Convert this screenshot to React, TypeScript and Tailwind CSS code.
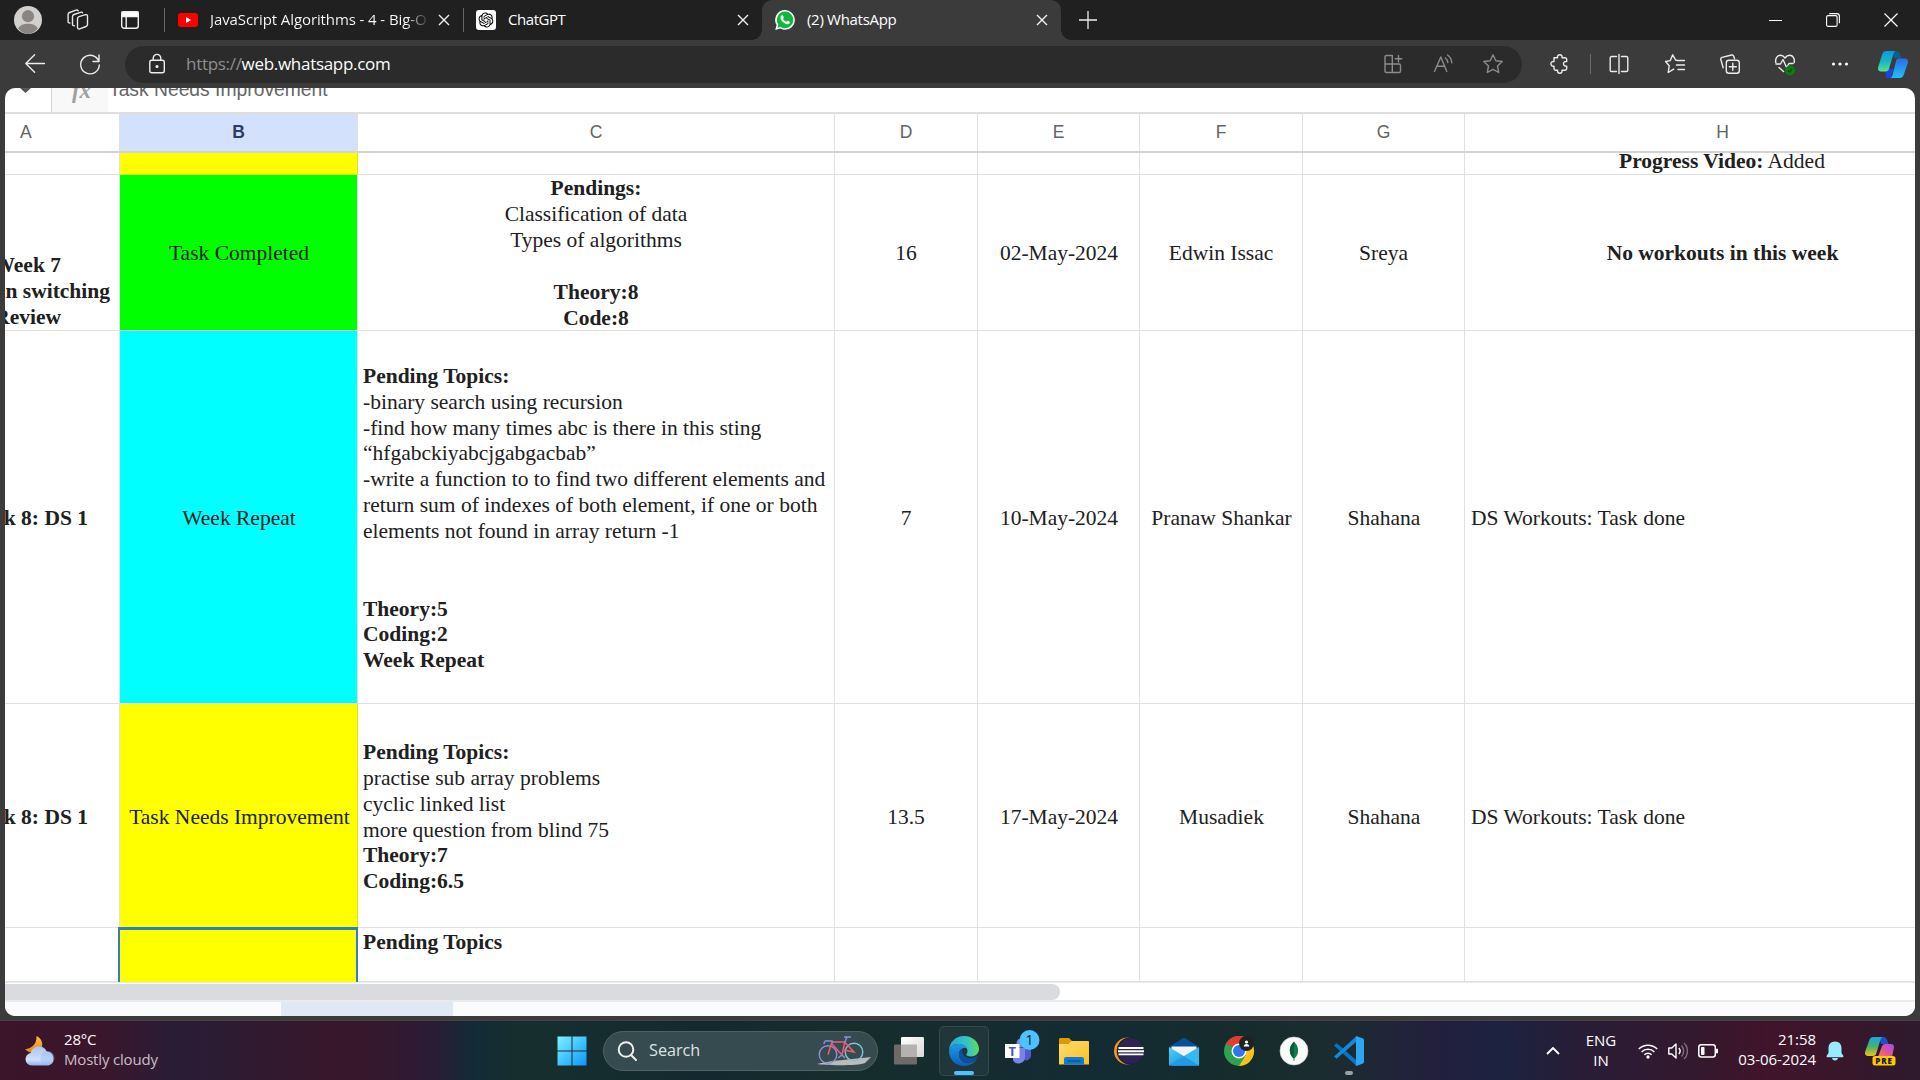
import type { ReactNode } from "react";
import { RiOpenaiFill } from "react-icons/ri";

const COLS = "grid grid-cols-[115px_238px_477px_143px_162px_163px_162px_1fr]";

function TabClose() {
  return (
    <svg className="size-3 shrink-0" viewBox="0 0 12 12" stroke="#f2f2f2" strokeWidth="1.4" fill="none">
      <path d="M1 1l10 10M11 1L1 11" />
    </svg>
  );
}

function TabStrip() {
  return (
    <div className="flex h-10 shrink-0 items-center bg-[#202020] font-['Open_Sans',sans-serif] text-[15px] text-white">
      <svg className="ml-3.5 size-7 shrink-0" viewBox="0 0 28 28">
        <circle cx="14" cy="14" r="14" fill="#d2d0ce" />
        <circle cx="14" cy="10.2" r="6.1" fill="#8a8582" />
        <path d="M4.2 22.5C6 19 10 17.8 14 17.8s8 1.2 9.800 4.700A14 14 0 0 1 14 28a14 14 0 0 1-9.800-5.500z" fill="#8a8582" />
      </svg>
      <svg className="ml-[25px] size-[22px] shrink-0" viewBox="0 0 22 22" fill="none" stroke="#e8e8e8" strokeWidth="1.4" strokeLinejoin="round" strokeLinecap="round">
        <path d="M10.500 9.500c0-1 .5-1.500 1.500-1.800l6.500-2c1.200-.3 2 .2 2 1.300v8.500c0 1-.5 1.600-1.500 2l-6.300 2.300c-1.200.4-2.200-.1-2.200-1.300z" />
        <path d="M7.300 16.800c-1 .1-1.800-.4-1.800-1.500V7.500c0-1 .5-1.600 1.500-2l6.500-2.200c1-.3 1.800-.1 2 .6" />
        <path d="M2.900 14c-1 .1-1.800-.4-1.800-1.500V5.500c0-1 .5-1.600 1.500-2L9 1.200c1-.3 1.800-.1 2.100.6" />
      </svg>
      <svg className="ml-8 size-[18px] shrink-0" viewBox="0 0 18 18" fill="none" stroke="#f2f2f2" strokeWidth="1.4">
        <rect x=".7" y=".7" width="16.600" height="16.600" rx="2.500" />
        <path d="M1 1h16v4.500H1z" fill="#fff" />
        <path d="M5.200 5v12" />
      </svg>
      <div className="ml-[25px] h-6 w-px shrink-0 bg-[#666]" />
      <div className="flex w-[298px] shrink-0 items-center pl-[13px]">
        <svg className="h-[14px] w-5 shrink-0" viewBox="0 0 20 14">
          <rect width="20" height="14" rx="3.200" fill="#f00" />
          <path d="M8 4l5.200 3L8 10z" fill="#fff" />
        </svg>
        <span className="mb-0.5 ml-3 w-[218px] overflow-hidden bg-linear-to-r from-white from-90% to-[#333] bg-clip-text tracking-[-0.1px] whitespace-nowrap text-transparent">
          JavaScript Algorithms - 4 - Big-O
        </span>
        <div className="ml-[10px] flex"><TabClose /></div>
      </div>
      <div className="h-6 w-px shrink-0 bg-[#666]" />
      <div className="flex w-[298px] shrink-0 items-center pl-3">
        <span className="flex size-5 items-center justify-center rounded-[3px] bg-white text-black"><RiOpenaiFill size={18} /></span>
        <span className="mb-0.5 ml-3 grow tracking-[-0.45px]">ChatGPT</span>
        <div className="mr-[13px] flex"><TabClose /></div>
      </div>
      <div className="relative flex h-10 w-[299px] shrink-0 items-center rounded-t-[10px] bg-[#3b3b3b] pl-[13px]">
        <div className="absolute bottom-0 -left-[10px] size-[10px] bg-[radial-gradient(circle_at_0_0,#202020_9.500px,#3b3b3b_10px)]" />
        <div className="absolute -right-[10px] bottom-0 size-[10px] bg-[radial-gradient(circle_at_100%_0,#202020_9.500px,#3b3b3b_10px)]" />
        <svg className="size-5 shrink-0" viewBox="0 0 20 20">
          <path d="M10 0a9.900 9.900 0 0 1 0 19.800 10 10 0 0 1-4.700-1.200L.2 20l1.400-5A9.900 9.900 0 0 1 10 0z" fill="#fff" />
          <path d="M10 1.600a8.300 8.300 0 0 1 0 16.600 8.300 8.300 0 0 1-4.300-1.200l-3.200.8.900-3.100A8.300 8.300 0 0 1 10 1.600z" fill="#0fb83c" />
          <path d="M6.700 5.300c.4-.3 1-.3 1.200.1l.9 1.900c.1.400-.8 1.200-.7 1.500.7 1.400 1.800 2.400 3.200 2.900.4.100 1-1.100 1.400-.9l1.900.9c.6.300.2 1.500-.3 1.900-.8.700-2 .8-3.200.3-2.500-.9-4.500-2.800-5.400-4.900-.5-1.500-.2-2.900 1-3.700z" fill="#fff" />
        </svg>
        <span className="mb-0.5 ml-3 grow tracking-[-0.3px]">(2) WhatsApp</span>
        <div className="mr-[13px] flex"><TabClose /></div>
      </div>
      <svg className="ml-[18px] size-[18px]" viewBox="0 0 18 18" stroke="#eee" strokeWidth="1.300"><path d="M9 0v18M0 9h18" /></svg>
      <div className="ml-auto flex items-center">
        <div className="h-px w-[13px] bg-white" />
        <svg className="ml-11 size-[14px]" viewBox="0 0 14 14" fill="none" stroke="#fff" strokeWidth="1.100">
          <rect x=".6" y="2.600" width="10.500" height="10.800" rx="1.500" />
          <path d="M3.200.6h7.500a2.700 2.700 0 0 1 2.700 2.700v7" />
        </svg>
        <svg className="mr-[22px] ml-11 size-[14px]" viewBox="0 0 14 14" stroke="#fff" strokeWidth="1.200"><path d="M.5.5l13 13M13.500.5L.5 13.500" /></svg>
      </div>
    </div>
  );
}

function Tool({ children, dim, w }: { children: ReactNode; dim?: boolean; w: string }) {
  return (
    <div className={`flex shrink-0 justify-center ${w}`}>
      <svg className="size-5 shrink-0 overflow-visible" viewBox="0 0 20 20" fill="none" stroke={dim ? "#8c8c8c" : "#ececec"} strokeWidth="1.400" strokeLinecap="round" strokeLinejoin="round">
        {children}
      </svg>
    </div>
  );
}

const STAR = "M10 .8l2.800 5.900 6.400.8-4.700 4.500 1.200 6.500L10 15.400l-5.700 3.100 1.200-6.500L.8 7.500l6.400-.8z";

function Toolbar() {
  return (
    <div className="flex h-12 shrink-0 items-center bg-[#3b3b3b] font-['Open_Sans',sans-serif]">
      <div className="ml-[25px] flex">
        <Tool w="w-5"><path d="M19.500 9.500H.8M9.600 .8L.8 9.500l8.800 8.800" /></Tool>
        <div className="w-[35px]" />
        <Tool w="w-5"><path d="M18.800 7.500A9.300 9.300 0 1 0 19.300 11M19 1v6.500h-6" /></Tool>
      </div>
      <div className="ml-[25px] flex h-[37px] w-[1397px] shrink-0 items-center rounded-full bg-[#2b2b2b] text-[17px]">
        <div className="w-[22px]" />
        <Tool w="w-5"><rect x="2.800" y="6.200" width="14.500" height="12.600" rx="2" /><path d="M6.200 6V4.200a3.800 3.800 0 0 1 7.600 0V6" /><circle cx="10" cy="12.500" r=".9" fill="#eee" /></Tool>
        <span className="ml-[19px] tracking-[-0.3px] text-[#8f8f8f]">https://<span className="text-white">web.whatsapp.com</span></span>
        <div className="ml-auto flex items-center pr-1">
          <Tool dim w="w-[50px]"><path d="M8.800 1.500H3.500a1.500 1.500 0 0 0-1.500 1.500v14a1.500 1.500 0 0 0 1.500 1.500H16a1.500 1.500 0 0 0 1.500-1.500v-5.500a1.500 1.500 0 0 0-1.500-1.500H2M9.300 1.500v17M15.500 1.500v6.600M12.200 4.800h6.600" /></Tool>
          <Tool dim w="w-[50px]"><path d="M1.500 17.500L7.800 3l6 14.500M3.800 12.300h8M12.300 4c1.500 1 2.300 2.400 2.500 4.500M14.600 1c2.800 2 4 4.500 4.200 7.800" /></Tool>
          <Tool dim w="w-[50px]"><path d={STAR} /></Tool>
        </div>
      </div>
      <Tool w="ml-4 w-11"><path d="M4 3.800h3.600C7 1.800 8.300.7 9.800.7s2.800 1.100 2.200 3.100h3a1.700 1.700 0 0 1 1.700 1.700v2c-2-.3-3.200.8-3.200 2.300s1.200 2.600 3.200 2.300v2.400a1.700 1.700 0 0 1-1.700 1.700H12c.4 2-.6 3-2.200 3s-2.600-1-2.200-3H5.700A1.700 1.700 0 0 1 4 14.500v-2.300c-2 .3-3.100-.9-3.100-2.400S2 7.200 4 7.500z" /></Tool>
      <div className="ml-2 h-5 w-px bg-[#6a6a6a]" />
      <Tool w="w-[56px]"><path d="M7.500 2.500H2.500a1.300 1.300 0 0 0-1.300 1.300v12.400a1.300 1.300 0 0 0 1.300 1.300h5M12.500 2.500h5a1.300 1.300 0 0 1 1.300 1.300v12.400a1.300 1.300 0 0 1-1.300 1.300h-5M10 .5v19" /></Tool>
      <Tool w="w-[56px]"><path d="M12.500 6.500L10.600 6 7.700.8 5.300 6.600l-4.700.9 3.600 4.300-1 6.700 5.500-3.300M13.500 6.500h6M11.500 11h8M13 15.500h6.500" /></Tool>
      <Tool w="w-[54px]"><path d="M14.500 4.500L13.600 2a1.700 1.700 0 0 0-2-1L2 3.400a1.700 1.700 0 0 0-1.200 2.100l2.400 8.200" /><rect x="6.300" y="6.300" width="13" height="13" rx="2.500" /><path d="M12.800 9.300v7M9.300 12.800h7" /></Tool>
      <Tool w="w-[56px]"><path d="M.8 8.500C0 4.500 2.300 1.300 5.300 1.300c2 0 3.500 1 4.700 2.700 1.200-1.700 2.700-2.700 4.700-2.700 3 0 5.300 3.200 4.500 7.200M1 10h4.500l2.500-4.500 3.600 8L14 9.500h4M4 13.500l4.500 4" /><circle cx="15" cy="16.500" r="4.300" fill="#107c10" stroke="#107c10" /><path d="M13.200 16.700l1.300 1.200 2.200-2.600" stroke="#0a4b0a" /></Tool>
      <Tool w="w-[54px]"><g fill="#fff" stroke="none"><circle cx="3.500" cy="10" r="1.600" /><circle cx="10" cy="10" r="1.600" /><circle cx="16.500" cy="10" r="1.600" /></g></Tool>
      <svg className="ml-[11px] h-[27px] w-[30px] shrink-0" viewBox="0 0 30 27">
        <defs>
          <linearGradient id="cpA" x1="0" y1="0" x2="0" y2="1"><stop stopColor="#0a9be0" /><stop offset=".5" stopColor="#18b5c5" /><stop offset="1" stopColor="#5fe08a" /></linearGradient>
          <linearGradient id="cpB" x1="0" y1="0" x2="0" y2="1"><stop stopColor="#2f6be4" /><stop offset="1" stopColor="#1fc0fa" /></linearGradient>
        </defs>
        <path d="M14 0h4c2.500 0 3.500 1.200 4.300 3.500L23.500 7H16z" fill="#0b5f8e" />
        <path d="M8 27h5l3-9H7l1 5.500c.4 2 0 3.500 0 3.500z" fill="#1c46d8" />
        <path d="M8.500 0H18c-1.500 0-2 1.200-2.600 3l-4.300 14.500c-.7 2.200-1.500 3-3.600 3H3c-2.500 0-3.500-1.800-2.800-4.500L4 4C4.800 1.300 6 0 8.500 0z" fill="url(#cpA)" />
        <path d="M20.500 7.500H27c2.500 0 3.500 1.800 2.800 4.500L26 23c-.9 2.800-2 4-4.500 4H12c1.500 0 2-1.200 2.600-3l3.300-13.500c.6-2.200 1-3 2.600-3z" fill="url(#cpB)" />
      </svg>
    </div>
  );
}

function Cell({ children, className = "" }: { children?: ReactNode; className?: string }) {
  return (
    <div className={`flex min-w-0 items-center overflow-hidden border-r border-b border-[#e0e0e0] whitespace-nowrap ${className}`}>
      {children}
    </div>
  );
}

function Lines({ items, className = "" }: { items: string[]; className?: string }) {
  return (
    <div className={className}>
      {items.map((t, i) => (
        <div key={i} className={t.startsWith("*") ? "h-[25.850px] font-bold" : "h-[25.850px]"}>{t.replace("*", "")}</div>
      ))}
    </div>
  );
}

function Sheet() {
  return (
    <div className="mx-[5px] flex h-[928px] shrink-0 flex-col overflow-hidden rounded-[10px] bg-white">
      <div className="flex h-[26px] shrink-0 overflow-hidden border-b-2 border-[#dedede]">
        <div className="flex w-[47px] justify-center border-r border-[#d5d5d5] pr-1.5">
          <svg className="h-[5px] w-[11px]" viewBox="0 0 11 5"><path d="M0 0h11L5.500 5z" fill="#555" /></svg>
        </div>
        <div className="flex w-[56px] justify-center bg-[#f8f8f8]">
          <span className="-mt-[10px] ml-[3px] font-['Liberation_Serif',serif] text-[23px] leading-[26px] font-bold text-[#a0a0a0] italic">fx</span>
        </div>
        <span className="-mt-[12px] ml-px font-['Liberation_Sans',sans-serif] text-[19.300px] leading-[28px] text-[#666]">Task Needs Improvement</span>
      </div>
      <div className={`${COLS} h-[39px] shrink-0 border-b-2 border-[#d3d3d3] font-['Liberation_Sans',sans-serif] text-[17.500px] text-[#606468]`}>
        <Cell className="border-b-0 border-[#cfcfcf] pl-[15px]">A</Cell>
        <Cell className="justify-center border-b-0 border-[#cfcfcf] bg-[#d3e1fc] font-bold text-[#2b3c66]">B</Cell>
        {["C", "D", "E", "F", "G"].map((c) => (
          <Cell key={c} className="justify-center border-b-0 border-[#cfcfcf]">{c}</Cell>
        ))}
        <Cell className="justify-center border-r-0 border-b-0 pl-[65px]">H</Cell>
      </div>
      <div className="flex h-[829px] shrink-0 flex-col font-['Liberation_Serif',serif] text-[21.500px] leading-[25.850px] text-[#202020]">
        <div className={`${COLS} h-[22px] shrink-0`}>
          <Cell />
          <Cell className="border-[#e6e600] bg-[#ffff00]" />
          <Cell /><Cell /><Cell /><Cell /><Cell />
          <Cell className="items-start justify-center border-r-0 pl-[64px]"><span className="-mt-[4px]"><b>Progress Video:</b> Added</span></Cell>
        </div>
        <div className={`${COLS} h-[156px] shrink-0`}>
          <Cell className="items-end justify-end">
            <div className="flex flex-col items-end">
              <div className="pr-[58px] font-bold">Week 7</div>
              <div className="pr-[9px] font-bold">n switching</div>
              <div className="-mb-px pr-[58px] font-bold">Review</div>
            </div>
          </Cell>
          <Cell className="justify-center border-[#00d820] bg-[#00ff00] pt-[3px] pl-px">Task Completed</Cell>
          <Cell className="justify-center pt-[3px] text-center">
            <Lines items={["*Pendings:", "Classification of data", "Types of algorithms", "", "*Theory:8", "*Code:8"]} />
          </Cell>
          <Cell className="justify-center pt-[3px]">16</Cell>
          <Cell className="justify-center pt-[3px] pl-px">02-May-2024</Cell>
          <Cell className="justify-center pt-[3px]">Edwin Issac</Cell>
          <Cell className="justify-center pt-[3px]">Sreya</Cell>
          <Cell className="justify-center border-r-0 pt-[3px] pl-[65px] font-bold">No workouts in this week</Cell>
        </div>
        <div className={`${COLS} h-[373px] shrink-0`}>
          <Cell className="justify-end pt-1 pr-[31px] font-bold">Week 8: DS 1</Cell>
          <Cell className="justify-center border-[#00e0e0] bg-[#00ffff] pt-1 pl-px">Week Repeat</Cell>
          <Cell className="pt-1 pl-[5px]">
            <Lines
              items={[
                "*Pending Topics:",
                "-binary search using recursion",
                "-find how many times abc is there in this sting",
                "“hfgabckiyabcjgabgacbab”",
                "-write a function to to find two different elements and",
                "return sum of indexes of both element, if one or both",
                "elements not found in array return -1",
                "",
                "",
                "*Theory:5",
                "*Coding:2",
                "*Week Repeat",
              ]}
            />
          </Cell>
          <Cell className="justify-center pt-1">7</Cell>
          <Cell className="justify-center pt-1 pl-px">10-May-2024</Cell>
          <Cell className="justify-center pt-1 pl-px">Pranaw Shankar</Cell>
          <Cell className="justify-center pt-1 pl-px">Shahana</Cell>
          <Cell className="border-r-0 pt-1 pl-[6px]">DS Workouts: Task done</Cell>
        </div>
        <div className={`${COLS} h-[224px] shrink-0`}>
          <Cell className="justify-end pt-1 pr-[31px] font-bold">Week 8: DS 1</Cell>
          <Cell className="justify-center border-[#e6e600] bg-[#ffff00] pt-1 pl-[2px]">Task Needs Improvement</Cell>
          <Cell className="pt-1 pl-[5px]">
            <Lines items={["*Pending Topics:", "practise sub array problems", "cyclic linked list", "more question from blind 75", "*Theory:7", "*Coding:6.5"]} />
          </Cell>
          <Cell className="justify-center pt-1">13.5</Cell>
          <Cell className="justify-center pt-1 pl-px">17-May-2024</Cell>
          <Cell className="justify-center pt-1 pl-px">Musadiek</Cell>
          <Cell className="justify-center pt-1 pl-px">Shahana</Cell>
          <Cell className="border-r-0 pt-1 pl-[6px]">DS Workouts: Task done</Cell>
        </div>
        <div className={`${COLS} h-[54px] shrink-0`}>
          <Cell />
          <div className="relative bg-[#ffff00]">
            <div className="absolute -top-px right-0 bottom-0 -left-[2px] border-t-[3px] border-r-2 border-l-2 border-[#2f7fc4]" />
          </div>
          <Cell className="items-start pt-[2px] pl-[5px] font-bold">Pending Topics</Cell>
          <Cell /><Cell /><Cell /><Cell />
          <Cell className="border-r-0" />
        </div>
      </div>
      <div className="h-[20px] shrink-0 border-t border-b-2 border-[#ebebeb] pt-px">
        <div className="h-4 w-[1055px] rounded-r-full bg-[#dadbde]" />
      </div>
      <div className="flex grow bg-[#f9fbfd]">
        <div className="ml-[276px] w-[172px] bg-[#e1e8f5]" />
      </div>
    </div>
  );
}

function AppIcon({ children, active, dot }: { children: ReactNode; active?: boolean; dot?: boolean }) {
  return (
    <div className="flex w-[55px] shrink-0 justify-center">
      <div className={active ? "relative flex size-[50px] items-center justify-center rounded-[5px] border border-white/10 bg-white/5" : "relative flex size-[50px] items-center justify-center"}>
        <svg className="size-[30px] overflow-visible" viewBox="0 0 30 30">{children}</svg>
        {active && <div className="absolute bottom-0 h-1 w-5 rounded-full bg-[#4cc2ff]" />}
        {dot && <div className="absolute bottom-[1px] h-1 w-2 rounded-full bg-[#9aa0a6]" />}
      </div>
    </div>
  );
}

function Taskbar() {
  return (
    <div className="flex h-[60px] shrink-0 items-center border-t border-[#4a3f45] bg-[linear-gradient(90deg,#3b152a_0,#3a162c_100px,#2b1c36_170px,#2c1c33_220px,#38172c_330px,#36182d_370px,#2b1c35_430px,#122b36_475px,#162e2d_520px,#152d2f_600px,#14292f_700px,#162d2d_850px,#132b33_1100px,#162c2c_1250px,#1c2b31_1340px,#231f3e_1440px,#1c2341_1500px,#2a1c35_1590px,#33192f_1690px,#41142a_1770px,#38172b_1850px,#2d1a2d_1920px)] font-['Open_Sans',sans-serif] text-white">
      <svg className="ml-6 h-[30px] w-[32px] shrink-0" viewBox="0 0 32 30">
        <defs>
          <linearGradient id="moon" x1="0" y1="0" x2="0" y2="1"><stop stopColor="#f8c33a" /><stop offset="1" stopColor="#ef7f1a" /></linearGradient>
          <linearGradient id="cloud" x1="0" y1="0" x2="0" y2="1"><stop stopColor="#a9c4f5" /><stop offset=".7" stopColor="#cfe0fb" /><stop offset="1" stopColor="#8fb2f0" /></linearGradient>
        </defs>
        <path d="M12.500 0c5 2 7.500 8 4.500 13-3 4.500-9 6-16 .5C8 12 13 8 12.500 0z" fill="url(#moon)" />
        <path d="M7.500 29.500a6.300 6.300 0 0 1-.8-12.500 8.500 8.500 0 0 1 16-1.500 7.200 7.200 0 0 1 1.800 14z" fill="url(#cloud)" />
        <circle cx="23.500" cy="22" r="7" fill="#9dbaf2" opacity=".45" />
      </svg>
      <div className="mb-1 ml-2 w-[473px] shrink-0 text-[15px] leading-5 tracking-[-0.18px]">
        <div>28°C</div>
        <div className="text-[#c9bfc8]">Mostly cloudy</div>
      </div>
      <div className="ml-[7px]">
        <AppIcon>
          <defs><linearGradient id="win" x1="0" y1="0" x2="1" y2="1"><stop stopColor="#7df2ff" /><stop offset="1" stopColor="#0a95fb" /></linearGradient></defs>
          <path d="M.5.5h14v14H.5zM15.500.5h14v14h-14zM.5 15.500h14v14H.5zM15.500 15.500h14v14h-14z" fill="url(#win)" />
        </AppIcon>
      </div>
      <div className="ml-1 flex h-10 w-[275px] shrink-0 items-center rounded-full border border-[#4f6266] bg-[#364b4f] pl-[13px]">
        <svg className="size-5" viewBox="0 0 20 20" fill="none" stroke="#f0f0f0" strokeWidth="2"><circle cx="9" cy="8.500" r="7.300" /><path d="M14 14l5 5" strokeLinecap="round" /></svg>
        <span className="ml-3 text-[16.200px] text-[#dfe3e4]">Search</span>
        <svg className="mr-1.5 ml-auto h-[31px] w-[54px]" viewBox="0 0 54 31" fill="none">
          <path d="M0 29c15-4 30-4 54-7l-6 6c-6 3-40 2.500-48 1z" fill="#b9bcbb" />
          <circle cx="11" cy="19.500" r="8.800" stroke="#8e8fd6" strokeWidth="1.400" />
          <circle cx="37" cy="17" r="8.800" stroke="#86c3d8" strokeWidth="1.400" />
          <path d="M11 19.500l4-12.500h12.500L37 17l-10-2M15 9l10 11 3-14" stroke="#ee5c78" strokeWidth="1.500" />
          <path d="M7 9c0-3 2-3.500 4-3h4l1 2M28 7l2-5M27 2h7M25 20l-4 3M25 20l3 3" stroke="#8492d8" strokeWidth="1.500" />
        </svg>
      </div>
      <div className="ml-[3px] flex">
        <AppIcon>
          <defs>
            <linearGradient id="tv" x1="0" y1="0" x2="1" y2="1"><stop stopColor="#fff" /><stop offset="1" stopColor="#d8d8d8" /></linearGradient>
            <linearGradient id="edgeA" x1="0" y1=".4" x2="1" y2=".3"><stop stopColor="#2aa5dd" /><stop offset=".6" stopColor="#35c3c2" /><stop offset="1" stopColor="#62df55" /></linearGradient>
            <linearGradient id="edgeB" x1="0" y1="0" x2="0" y2="1"><stop stopColor="#1b9de2" /><stop offset="1" stopColor="#0d5cb8" /></linearGradient>
          </defs>
          <rect x="0" y="8.500" width="23" height="20" rx="1.200" fill="#6d6a68" />
          <rect x="7" y="1" width="23" height="20" rx="1.200" fill="url(#tv)" />
          <path d="M7 8.500h16V21H7z" fill="#b4b2b0" />
        </AppIcon>
        <AppIcon active>
          <path d="M0 15C0 6 7 0 15 0c9 0 15 6.500 15 13 0 4.500-3.500 7.500-8 7.500-3.500 0-4.700-1.200-4.700-2 0-.7 1.200-1.200 1.200-3.500C18.500 11 14 8 9.500 8 4 8 .5 11.500 0 15z" fill="url(#edgeA)" />
          <path d="M0 15C.5 11 4.500 8 9.500 8c4 0 7.500 2 8.500 4.500-4-1.500-8 1.500-8 6 0 5 4.500 9 9.500 8.500 3-.3 5.500-1.500 8-3.500C25 27.500 20 30 15 30 6.500 30 0 23.500 0 15z" fill="url(#edgeB)" />
          <path d="M10 18.500c0-3 1.500-5.300 3.500-6.200-1.500 5 2 9.700 7.500 10 3 .1 5-1 6.500-1.800.8-.4 1.300.2.8 1-3 4.500-9 6-12 4.800-3.500-1.300-6.300-4-6.300-7.800z" fill="#0c4fa0" />
        </AppIcon>
        <AppIcon>
          <circle cx="17" cy="7" r="4.500" fill="#7b83eb" />
          <path d="M20 12h7v8a5 5 0 0 1-7 4z" fill="#5059c9" />
          <path d="M9 12h12v9.500a6.500 6.500 0 0 1-12 3z" fill="#7b83eb" />
          <rect x="1" y="8" width="14.500" height="14" fill="#fff" />
          <text x="8.300" y="20" textAnchor="middle" fontFamily="Open Sans, sans-serif" fontWeight="700" fontSize="13" fill="#4b53bc">T</text>
          <circle cx="25.500" cy="4" r="10" fill="#4cc2ff" />
          <text x="25.500" y="9" textAnchor="middle" fontFamily="Open Sans, sans-serif" fontSize="14" fill="#10222b">1</text>
        </AppIcon>
        <AppIcon>
          <defs><linearGradient id="fold" x1="0" y1="0" x2="1" y2="1"><stop stopColor="#ffdc6b" /><stop offset="1" stopColor="#fbbf24" /></linearGradient></defs>
          <path d="M0 3.500C0 2.500.7 2 1.500 2H10l3 3h16v6H0z" fill="#dd9a05" />
          <path d="M0 8h9.500l3-3H29a1 1 0 0 1 1 1v22.500H0z" fill="url(#fold)" />
          <path d="M5 28.500V23a2 2 0 0 1 2-2h16a2 2 0 0 1 2 2v5.500z" fill="#127bd0" />
          <path d="M8.500 25h13" stroke="#0b4f90" strokeWidth="1.300" />
        </AppIcon>
        <AppIcon>
          <circle cx="13.500" cy="15" r="13.500" fill="#f7941e" />
          <circle cx="16.500" cy="15" r="13.800" fill="#162530" />
          <circle cx="17" cy="15" r="12.800" fill="#2c2255" />
          <path d="M4.500 12h25M4 15.200h26M4.500 18.400h25" stroke="#fff" strokeWidth="1.900" />
        </AppIcon>
        <AppIcon>
          <defs><linearGradient id="mail" x1="0" y1="0" x2="1" y2="1"><stop stopColor="#4bd4fa" /><stop offset="1" stopColor="#1180d8" /></linearGradient></defs>
          <path d="M0 11L15 1.500 30 11v6H0z" fill="#0a4f9c" />
          <path d="M2.500 10.500h25v10h-25z" fill="#f2f4f6" />
          <path d="M0 11l30 18.500H0z" fill="url(#mail)" />
          <path d="M30 11v18.500H2L15 20z" fill="#35b9f1" />
          <path d="M15 20l15 9.500H0z" fill="#1d8de0" opacity=".7" />
        </AppIcon>
        <AppIcon>
          <circle cx="15" cy="15" r="15" fill="#2fa24f" />
          <path d="M15 15L2 7.500A15 15 0 0 1 28 7.500H15z" fill="#e23b30" />
          <path d="M15 15h0L28 7.500A15 15 0 0 1 15 30l7-11z" fill="#fbc116" />
          <circle cx="15" cy="15" r="7.500" fill="#fff" />
          <circle cx="15" cy="15" r="6" fill="#2f77ee" />
          <circle cx="22.500" cy="7.500" r="7.500" fill="#1e2221" />
          <circle cx="22.500" cy="6" r="1.600" fill="#fff" />
          <path d="M19.700 10.500c0-3.500 5.600-3.500 5.600 0z" fill="#fff" />
        </AppIcon>
        <AppIcon>
          <circle cx="15" cy="15" r="14" fill="#fafafa" stroke="#cfd4d3" strokeWidth=".6" />
          <path d="M15 5.500c3.500 4 4.500 6.500 4 10.500-.3 3-2 5-3.500 6.300L15.300 25h-.6l-.2-2.700C13 21 11.300 19 11 16c-.5-4 .5-6.500 4-10.500z" fill="#0f7a4c" />
          <path d="M15 5.500V22.500c-2-1.500-3.700-3.500-4-6.500-.5-4 .5-6.500 4-10.500z" fill="#0a5c3c" />
        </AppIcon>
        <AppIcon dot>
          <path d="M0 9.500L2.500 7.300 7 10.800 22 24v5.500z" fill="#0a74c4" />
          <path d="M0 20.500l2.500 2.200L22 6V.5z" fill="#1489d8" />
          <path d="M22 0l6.500 2.300c1 .4 1.500 1 1.500 2.200v21c0 1.200-.5 1.800-1.500 2.200L22 30z" fill="#2aa6f2" />
        </AppIcon>
      </div>
      <svg className="ml-auto h-2 w-[14px] shrink-0" viewBox="0 0 14 8" fill="none" stroke="#fff" strokeWidth="1.900"><path d="M1 7l6-6 6 6" /></svg>
      <div className="mb-0.5 ml-[21px] w-10 text-center text-[15px] leading-5"><div>ENG</div><div>IN</div></div>
      <svg className="ml-[17px] h-4 w-5 shrink-0" viewBox="0 0 20 16" fill="none" stroke="#fff" strokeWidth="1.500"><path d="M.8 6a13 13 0 0 1 18.400 0M3.600 9a9 9 0 0 1 12.800 0M6.400 11.800a5 5 0 0 1 7.200 0" /><circle cx="10" cy="14" r="1.700" fill="#fff" stroke="none" /></svg>
      <svg className="ml-[10px] h-[18px] w-5 shrink-0" viewBox="0 0 20 18" fill="none" stroke="#fff" strokeWidth="1.400"><path d="M.8 6v6h3l4.200 4V2L3.800 6z" strokeLinejoin="round" /><path d="M10.800 6a4.500 4.500 0 0 1 0 6" /><path d="M13.500 3.500a8 8 0 0 1 0 11M16 1a11 11 0 0 1 0 16" stroke="#7d6f7d" /></svg>
      <svg className="ml-[10px] h-[14px] w-5 shrink-0" viewBox="0 0 20 14" fill="none" stroke="#fff" strokeWidth="1.500"><rect x=".8" y=".8" width="16.500" height="12.200" rx="2.500" /><rect x="3" y="3" width="3.500" height="8" rx=".8" fill="#fff" stroke="none" /><path d="M19 4.800v4.500" strokeWidth="2" /></svg>
      <div className="mb-1 ml-[20px] w-[78px] text-right text-[15px] leading-5 tracking-[-0.05px] whitespace-nowrap"><div>21:58</div><div>03-06-2024</div></div>
      <svg className="ml-[10px] h-5 w-[18px] shrink-0" viewBox="0 0 18 20" fill="#99ebff"><path d="M9 .5c4 0 6.500 2.800 6.500 6.500v5l1.800 2.800c.4.700 0 1.400-.8 1.400h-15c-.8 0-1.200-.7-.8-1.400L2.500 12V7C2.500 3.300 5 .5 9 .5zM6 17h6c-.4 1.700-1.400 2.500-3 2.500S6.400 18.700 6 17z" /></svg>
      <svg className="mr-[24px] ml-[21px] h-[30px] w-[31px] shrink-0" viewBox="0 0 31 30">
        <defs>
          <linearGradient id="preA" x1="0" y1="0" x2="0" y2="1"><stop stopColor="#1aa5ea" /><stop offset=".5" stopColor="#45b36b" /><stop offset="1" stopColor="#f2c21c" /></linearGradient>
          <linearGradient id="preB" x1="1" y1="0" x2="0" y2="1"><stop stopColor="#9b52f0" /><stop offset=".5" stopColor="#e0509f" /><stop offset="1" stopColor="#fb7a5a" /></linearGradient>
        </defs>
        <path d="M14 1h4c2.500 0 3.500 1 4.300 3.500L23.500 8H16z" fill="#1f4fd0" />
        <path d="M8.500 1H18c-1.500 0-2 1.200-2.600 3l-4 13c-.7 2.200-1.500 3-3.600 3H3c-2.500 0-3.500-1.800-2.800-4.500L4 5C4.800 2.300 6 1 8.500 1z" fill="url(#preA)" />
        <path d="M20.500 8H26c2.500 0 3.500 1.800 2.800 4.500L27 21H13l3.500-9.500C17.300 9 18.500 8 20.500 8z" fill="url(#preB)" />
        <rect x="7.500" y="20" width="23" height="9.500" rx="2.500" fill="#ffc80a" />
        <text x="19" y="27.600" textAnchor="middle" fontFamily="Open Sans, sans-serif" fontWeight="800" fontSize="8" letterSpacing=".8" fill="#1a1a1a">PRE</text>
      </svg>
    </div>
  );
}

export default function App() {
  return (
    <div className="flex h-[1080px] w-[1920px] flex-col overflow-hidden bg-[#3b3b3b]">
      <TabStrip />
      <Toolbar />
      <Sheet />
      <div className="h-1 shrink-0" />
      <Taskbar />
    </div>
  );
}
